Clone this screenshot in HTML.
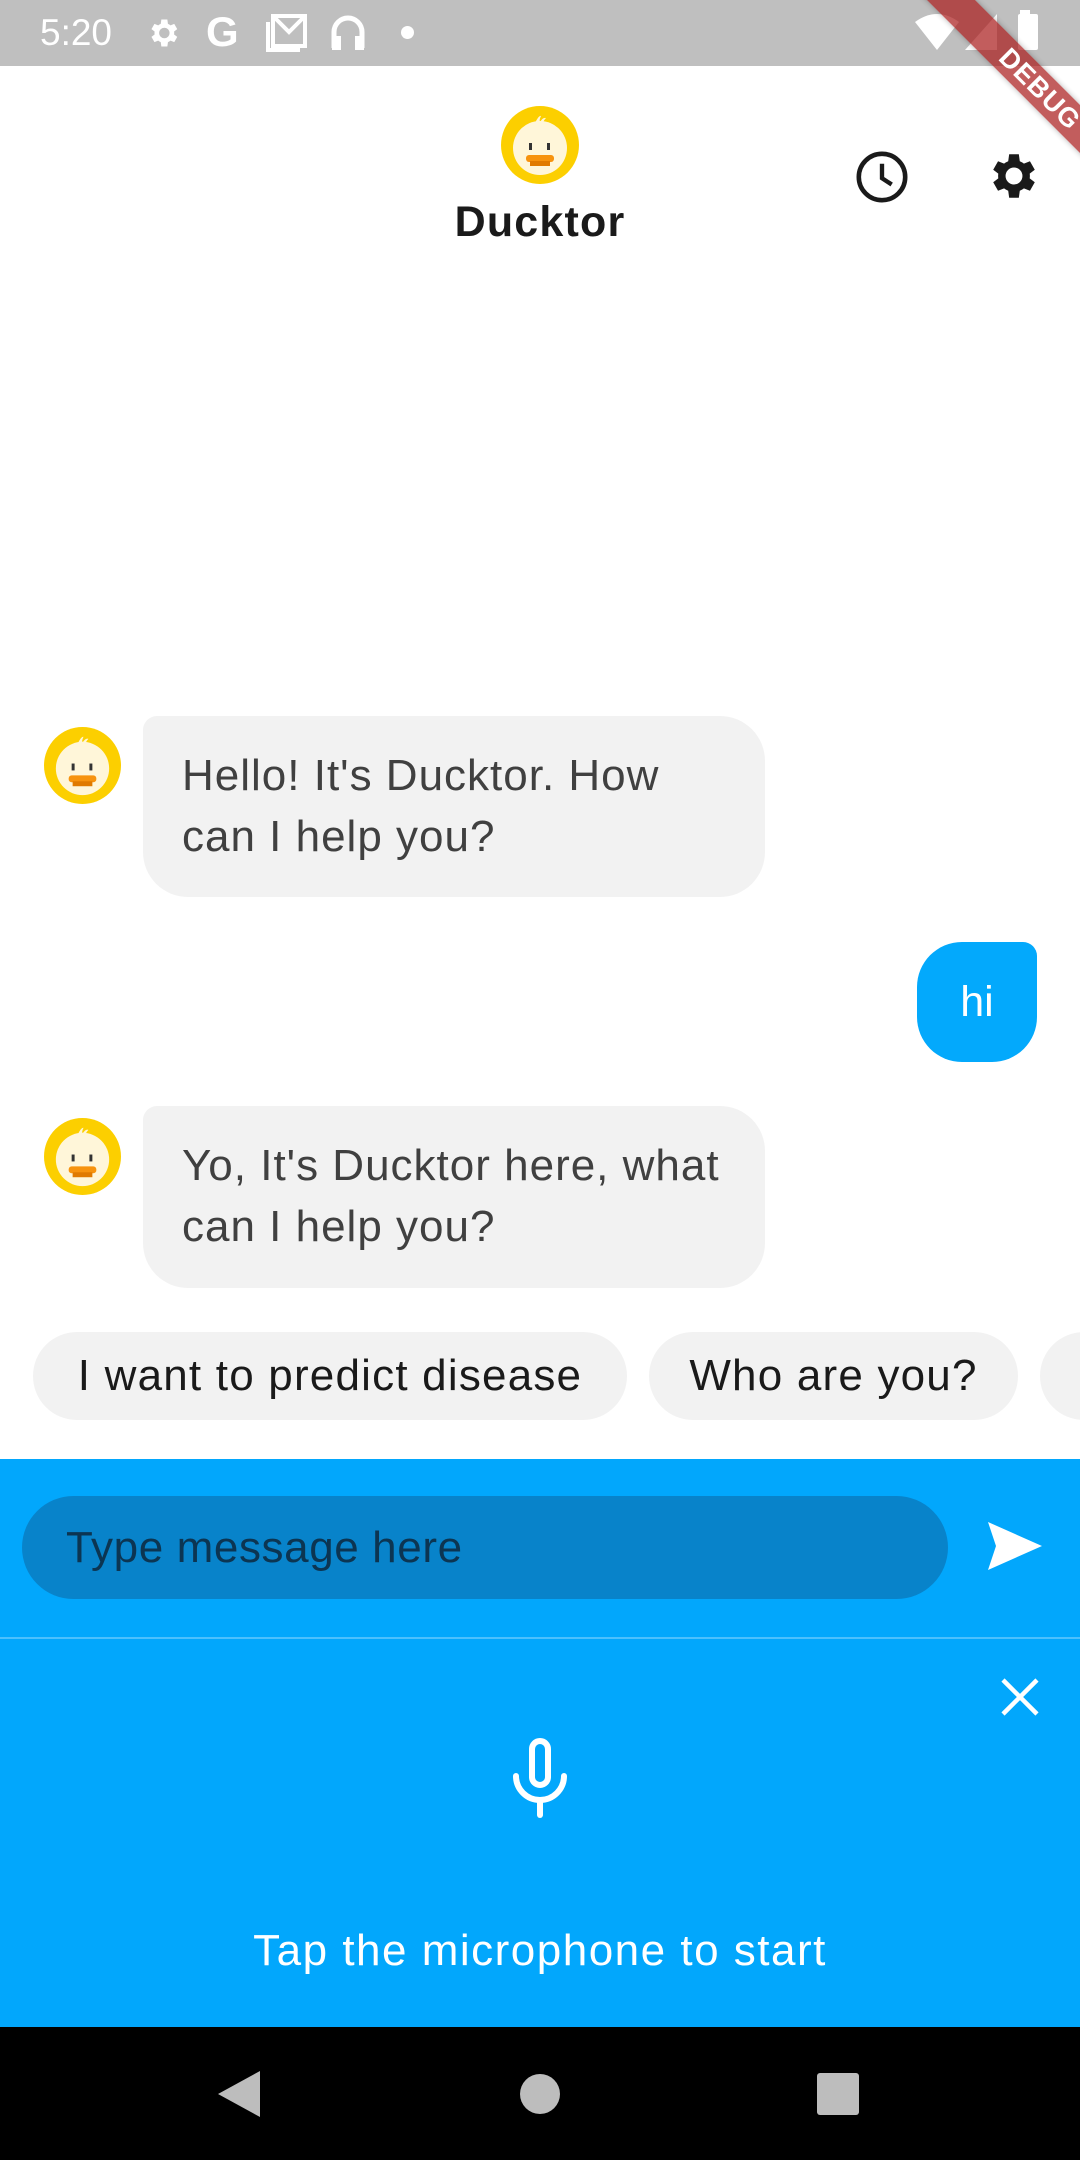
<!DOCTYPE html>
<html><head><meta charset="utf-8"><style>
*{margin:0;padding:0;box-sizing:border-box}
body{width:1080px;height:2160px;position:relative;overflow:hidden;background:#fff;font-family:"Liberation Sans",sans-serif}
.abs{position:absolute}
.status{left:0;top:0;width:1080px;height:66px;background:#bfbfbf}
.bubble{background:#f2f2f2;color:#404040;font-size:44px;line-height:61px;padding:0 0 0 39px;letter-spacing:1px;white-space:nowrap}
.chip{background:#f2f2f2;color:#1a1a1a;font-size:44px;height:88px;line-height:88px;border-radius:44px;text-align:center;letter-spacing:1.2px;white-space:nowrap}
</style></head><body>
<div class="abs status"></div>
<div class="abs" style="left:40px;top:12px;color:#fff;font-size:37px;">5:20</div>
<svg class="abs" style="left:145px;top:15px" width="36" height="36" viewBox="0 0 24 24"><path fill="#fff" d="M19.4 13a7.5 7.5 0 000-2l2.1-1.6-2-3.5-2.5 1a7 7 0 00-1.7-1L14.9 3h-4l-.4 2.9a7 7 0 00-1.7 1l-2.5-1-2 3.5L6.4 11a7.5 7.5 0 000 2l-2.1 1.6 2 3.5 2.5-1a7 7 0 001.7 1l.4 2.9h4l.4-2.9a7 7 0 001.7-1l2.5 1 2-3.5zM12.9 15.5a3.5 3.5 0 110-7 3.5 3.5 0 010 7z"/></svg>
<div class="abs" style="left:206px;top:8px;color:#fff;font-size:42px;font-weight:bold">G</div>
<svg class="abs" style="left:265px;top:14px" width="42" height="38" viewBox="0 0 42 38"><path d="M8 2h32v30H8z M8 2l16 16 16-16 M3 8v28h32" fill="none" stroke="#fff" stroke-width="4"/></svg>
<svg class="abs" style="left:330px;top:14px" width="36" height="38" viewBox="0 0 36 38"><path d="M4 34V18a14 14 0 0128 0v16" fill="none" stroke="#fff" stroke-width="5"/><rect x="2" y="22" width="9" height="14" fill="#fff"/><rect x="25" y="22" width="9" height="14" fill="#fff"/></svg>
<div class="abs" style="left:401px;top:26px;width:13px;height:13px;border-radius:50%;background:#fff"></div>
<svg class="abs" style="left:915px;top:14px" width="44" height="36" viewBox="0 0 44 36"><path d="M0 8Q22-8 44 8L22 36z" fill="#fff"/></svg>
<svg class="abs" style="left:965px;top:14px" width="32" height="36"><path d="M0 36L32 0v36z" fill="#fff"/></svg>
<div class="abs" style="left:1018px;top:14px;width:20px;height:36px;background:#fff;border-radius:2px"></div>
<div class="abs" style="left:1020px;top:10px;width:10px;height:6px;background:#fff"></div>

<div class="abs" style="left:880px;top:72px;width:320px;height:34px;background:rgba(170,30,30,0.72);transform:rotate(45deg);color:#fff;font-weight:bold;font-size:27px;line-height:34px;text-align:center;letter-spacing:1px;box-shadow:0 0 6px rgba(0,0,0,.3)">DEBUG</div>

<svg class="abs" style="left:501px;top:106px" width="78" height="78" viewBox="0 0 78 78">
<circle cx="39" cy="39" r="39" fill="#fccf00"/><circle cx="39" cy="42" r="27" fill="#fff6d9"/>
<path d="M34 17q4-8 6-7-2 4-1 6 3-5 6-4-3 3-3 6z" fill="#fff6d9"/>
<rect x="28" y="37" width="3" height="7" fill="#333"/><rect x="46" y="37" width="3" height="7" fill="#333"/>
<rect x="25" y="49" width="28" height="7" rx="3" fill="#f7930e"/><rect x="29" y="55" width="20" height="5" fill="#e07a00"/></svg>
<div class="abs" style="left:0;width:1080px;top:198px;text-align:center;font-size:43px;font-weight:bold;color:#1a1a1a;letter-spacing:1.2px">Ducktor</div>
<svg class="abs" style="left:853px;top:148px" width="58" height="58" viewBox="0 0 24 24"><circle cx="12" cy="12" r="9.6" fill="none" stroke="#1a1a1a" stroke-width="1.9"/><path d="M12 6.5V12.5l4 2.6" fill="none" stroke="#1a1a1a" stroke-width="1.8"/></svg>
<svg class="abs" style="left:985px;top:147px" width="58" height="58" viewBox="0 0 24 24"><path fill="#1a1a1a" d="M19.4 13a7.5 7.5 0 000-2l2.1-1.6-2-3.5-2.5 1a7 7 0 00-1.7-1L14.9 3h-4l-.4 2.9a7 7 0 00-1.7 1l-2.5-1-2 3.5L6.4 11a7.5 7.5 0 000 2l-2.1 1.6 2 3.5 2.5-1a7 7 0 001.7 1l.4 2.9h4l.4-2.9a7 7 0 001.7-1l2.5 1 2-3.5zM12.9 15.5a3.5 3.5 0 110-7 3.5 3.5 0 010 7z" transform="translate(-0.9 0)"/></svg>

<svg class="abs" style="left:44px;top:727px" width="77" height="77" viewBox="0 0 78 78">
<circle cx="39" cy="39" r="39" fill="#fccf00"/><circle cx="39" cy="42" r="27" fill="#fff6d9"/>
<path d="M34 17q4-8 6-7-2 4-1 6 3-5 6-4-3 3-3 6z" fill="#fff6d9"/>
<rect x="28" y="37" width="3" height="7" fill="#333"/><rect x="46" y="37" width="3" height="7" fill="#333"/>
<rect x="25" y="49" width="28" height="7" rx="3" fill="#f7930e"/><rect x="29" y="55" width="20" height="5" fill="#e07a00"/></svg>
<svg class="abs" style="left:44px;top:1118px" width="77" height="77" viewBox="0 0 78 78">
<circle cx="39" cy="39" r="39" fill="#fccf00"/><circle cx="39" cy="42" r="27" fill="#fff6d9"/>
<path d="M34 17q4-8 6-7-2 4-1 6 3-5 6-4-3 3-3 6z" fill="#fff6d9"/>
<rect x="28" y="37" width="3" height="7" fill="#333"/><rect x="46" y="37" width="3" height="7" fill="#333"/>
<rect x="25" y="49" width="28" height="7" rx="3" fill="#f7930e"/><rect x="29" y="55" width="20" height="5" fill="#e07a00"/></svg>

<div class="abs bubble" style="left:143px;top:716px;width:622px;height:181px;border-radius:14px 45px 45px 45px;padding-top:29px">Hello! It's Ducktor. How<br>can I help you?</div>
<div class="abs" style="left:917px;top:942px;width:120px;height:120px;background:#03a9fc;border-radius:45px 14px 45px 45px;color:#fff;font-size:43px;line-height:120px;text-align:center">hi</div>
<div class="abs bubble" style="left:143px;top:1106px;width:622px;height:182px;border-radius:14px 45px 45px 45px;padding-top:29px">Yo, It's Ducktor here, what<br>can I help you?</div>

<div class="abs chip" style="left:33px;top:1332px;width:594px">I want to predict disease</div>
<div class="abs chip" style="left:649px;top:1332px;width:369px">Who are you?</div>
<div class="abs chip" style="left:1040px;top:1332px;width:200px"></div>

<div class="abs" style="left:0;top:1459px;width:1080px;height:568px;background:#02a7fc"></div>
<div class="abs" style="left:0;top:1637px;width:1080px;height:2px;background:#4cc0fd"></div>
<div class="abs" style="left:22px;top:1496px;width:926px;height:103px;background:#0883ca;border-radius:52px;color:#0c3552;font-size:44px;line-height:103px;padding-left:44px;letter-spacing:0.6px">Type message here</div>
<svg class="abs" style="left:988px;top:1520px" width="56" height="52" viewBox="0 0 56 52"><path d="M0 2L54 26 0 50 8 26z" fill="#fff"/></svg>
<svg class="abs" style="left:1000px;top:1677px" width="40" height="40" viewBox="0 0 40 40"><path d="M3 3L37 37M37 3L3 37" stroke="#fff" stroke-width="4.5"/></svg>
<svg class="abs" style="left:510px;top:1738px" width="60" height="80" viewBox="0 0 60 80"><rect x="22" y="3" width="16" height="44" rx="8" fill="none" stroke="#fff" stroke-width="6"/><path d="M6 38a24 24 0 0048 0" fill="none" stroke="#fff" stroke-width="6" stroke-linecap="round"/><path d="M30 62v15" stroke="#fff" stroke-width="6" stroke-linecap="round"/></svg>
<div class="abs" style="left:0;width:1080px;top:1926px;text-align:center;color:#fff;font-size:44px;letter-spacing:1.5px">Tap the microphone to start</div>

<div class="abs" style="left:0;top:2027px;width:1080px;height:133px;background:#000"></div>
<svg class="abs" style="left:218px;top:2071px" width="42" height="46"><path d="M42 0V46L0 23z" fill="#bdbdbd"/></svg>
<div class="abs" style="left:520px;top:2074px;width:40px;height:40px;border-radius:50%;background:#bdbdbd"></div>
<div class="abs" style="left:817px;top:2073px;width:42px;height:42px;border-radius:3px;background:#bdbdbd"></div>
</body></html>
